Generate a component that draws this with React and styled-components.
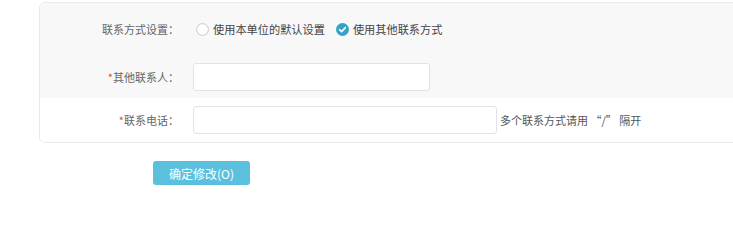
import React from "react";
import styled, { createGlobalStyle } from "styled-components";

const Global = createGlobalStyle`
  html, body { margin: 0; padding: 0; background: #fff; overflow: hidden; }
  body { font-family: "Noto Sans CJK SC", "Noto Sans", sans-serif; font-size: 11px; color: #555; }
`;

const Page = styled.div`
  padding: 2px 0 0 39px;
  width: 760px;
`;

const Card = styled.div`
  border: 1px solid #e9e9e9;
  border-radius: 6px;
  overflow: hidden;
  width: 720px;
`;

const Section = styled.div`
  background: ${(p) => (p.$grey ? "#f8f8f8" : "#fff")};
`;

const Row = styled.div`
  display: flex;
  align-items: center;
  height: ${(p) => p.$h}px;
`;

const Label = styled.div`
  width: 139px;
  margin-right: 14px;
  text-align: right;
  color: #666;
  line-height: 16px;
`;

const Star = styled.span`
  color: #e8463f;
`;

const Input = styled.input`
  box-sizing: border-box;
  width: ${(p) => p.$w}px;
  height: ${(p) => p.$hh}px;
  border: 1px solid #e3e3e3;
  border-radius: 3px;
  background: #fff;
  outline: none;
  padding: 0 8px;
  font: inherit;
`;

const Hint = styled.span`
  margin-left: 3px;
  color: #555;
`;

const RadioGroup = styled.div`
  display: flex;
  align-items: center;
  padding-left: 3px;
  gap: 11px;
`;

const RadioItem = styled.label`
  display: flex;
  align-items: center;
  gap: 4px;
  color: #444;
  font-size: 11.2px;
  line-height: 16px;
`;

const RadioIcon = ({ checked }) =>
  checked ? (
    <svg width="13" height="13" viewBox="0 0 13 13">
      <circle cx="6.5" cy="6.5" r="6.5" fill="#35a2c8" />
      <path d="M3.6 6.7 L5.6 8.6 L9.4 4.6" fill="none" stroke="#fff" strokeWidth="1.6" strokeLinecap="round" strokeLinejoin="round" />
    </svg>
  ) : (
    <svg width="13" height="13" viewBox="0 0 13 13">
      <circle cx="6.5" cy="6.5" r="5.9" fill="#fff" stroke="#c8c8c8" strokeWidth="1" />
    </svg>
  );

const ButtonBar = styled.div`
  padding: 18px 0 0 114px;
`;

const Button = styled.button`
  width: 97px;
  height: 24px;
  border: none;
  border-radius: 3px;
  background: #5bc0de;
  color: #fff;
  font: inherit;
  font-size: 12px;
  padding: 0;
`;

export default function App() {
  return (
    <>
      <Global />
      <Page>
        <Card>
          <Section $grey>
            <Row $h={52}>
              <Label>联系方式设置：</Label>
              <RadioGroup>
                <RadioItem>
                  <RadioIcon />
                  使用本单位的默认设置
                </RadioItem>
                <RadioItem>
                  <RadioIcon checked />
                  使用其他联系方式
                </RadioItem>
              </RadioGroup>
            </Row>
            <Row $h={43}>
              <Label>
                <Star>*</Star>其他联系人：
              </Label>
              <Input $w={237} $hh={28} />
            </Row>
          </Section>
          <Section>
            <Row $h={44}>
              <Label>
                <Star>*</Star>联系电话：
              </Label>
              <Input $w={304} $hh={28} />
              <Hint>多个联系方式请用 “/” 隔开</Hint>
            </Row>
          </Section>
        </Card>
        <ButtonBar>
          <Button>确定修改(O)</Button>
        </ButtonBar>
      </Page>
    </>
  );
}
